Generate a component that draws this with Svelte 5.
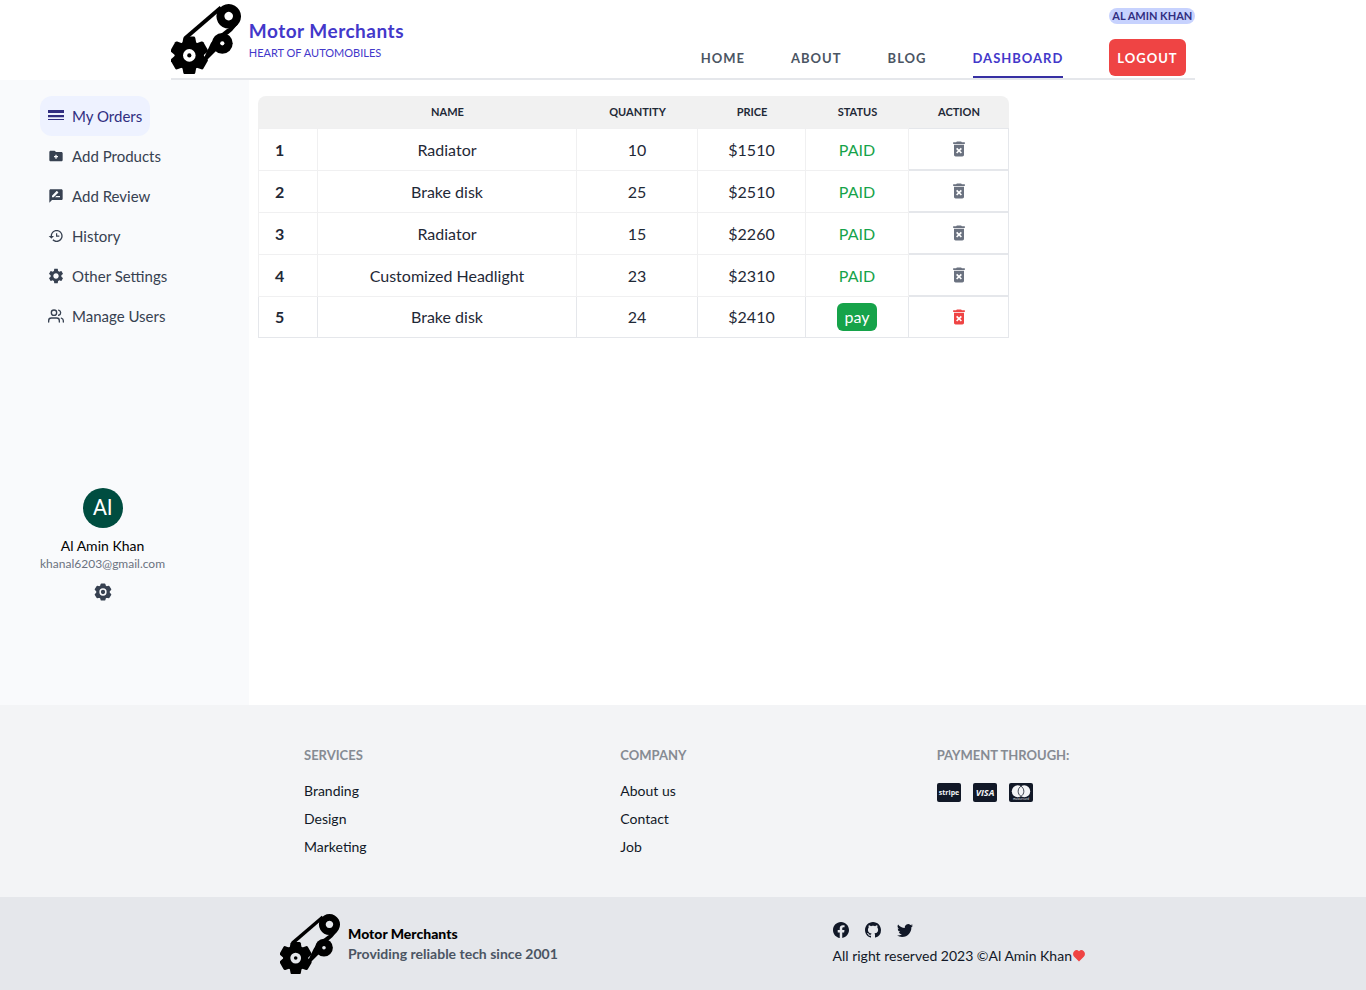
<script>
  const navLinks = ['Home', 'About', 'Blog', 'Dashboard'];
  const menu = [
    { label: 'My Orders', icon: 'orders' },
    { label: 'Add Products', icon: 'folder' },
    { label: 'Add Review', icon: 'review' },
    { label: 'History', icon: 'history' },
    { label: 'Other Settings', icon: 'settings' },
    { label: 'Manage Users', icon: 'users' }
  ];
  const orders = [
    { name: 'Radiator', quantity: 10, price: 1510, paid: true },
    { name: 'Brake disk', quantity: 25, price: 2510, paid: true },
    { name: 'Radiator', quantity: 15, price: 2260, paid: true },
    { name: 'Customized Headlight', quantity: 23, price: 2310, paid: true },
    { name: 'Brake disk', quantity: 24, price: 2410, paid: false }
  ];
  const footerColumns = [
    { title: 'Services', links: ['Branding', 'Design', 'Marketing'] },
    { title: 'Company', links: ['About us', 'Contact', 'Job'] }
  ];
  const teeth = [0, 60, 120, 180, 240, 300];
</script>

{#snippet logo()}
  <svg class="logo" viewBox="0 0 70 70" aria-hidden="true">
    <path d="M14.5 34 50 3.500" fill="none" stroke="#000" stroke-width="4" />
    <path d="M67 20 61 27Q58 30 54 32L46 40 40 47 35 58 32 56 39 41Q41 36 46 33L56 25Z" />
    <path d="M42 42 34 57 37 55 46 46Z" />
    <path fill-rule="evenodd" d="M57.7 0a12.3 12.3 0 1 0 .01 0ZM57.7 7.8a4.3 4.3 0 1 1-.01 0Z" />
    <circle cx="51.3" cy="39.3" r="10.4" />
    <circle class="hole" cx="51.3" cy="39.3" r="2.1" />
    <circle cx="18.3" cy="51.4" r="14.6" />
    {#each teeth as angle}
      <path d="M11 41 12.3 34Q12.7 32.6 14 32.6H22.6Q23.9 32.6 24.3 34L25.600 41Z" transform="rotate({angle} 18.3 51.4)" />
    {/each}
    <circle class="hole" cx="18.3" cy="51.4" r="6.3" />
    <circle cx="18.3" cy="51.4" r="2.1" />
  </svg>
{/snippet}

{#snippet menuIcon(name)}
  <svg class="icon" viewBox="0 0 24 24" fill="currentColor" aria-hidden="true">
    {#if name === 'orders'}
      <path d="M0 3h24v4.500H0zM0 10.500h24v3.500H0zM0 16.500h24V18H0z" />
    {:else if name === 'folder'}
      <path fill-rule="evenodd" d="M20 6h-8l-2-2H4c-1.11 0-1.99.89-1.99 2L2 18c0 1.11.89 2 2 2h16c1.11 0 2-.89 2-2V8c0-1.11-.89-2-2-2zM11 10h2v2h2v2h-2v2h-2v-2H9v-2h2z" />
    {:else if name === 'review'}
      <path d="M20 2H4c-1.1 0-1.99.9-1.99 2L2 22l4-4h14c1.1 0 2-.9 2-2V4c0-1.1-.9-2-2-2zM6 14v-2.47l6.88-6.88c.2-.2.51-.2.71 0l1.77 1.77c.2.2.2.51 0 .71L8.47 14H6zm12 0h-7.5l2-2H18v2z" />
    {:else if name === 'history'}
      <path d="M13 3c-4.97 0-9 4.03-9 9H1l3.89 3.89.07.14L9 12H6c0-3.87 3.13-7 7-7s7 3.13 7 7-3.13 7-7 7c-1.93 0-3.68-.79-4.94-2.06l-1.42 1.42C8.27 19.99 10.51 21 13 21c4.97 0 9-4.03 9-9s-4.03-9-9-9zm-1 5v5h5v-1.8h-3.2V8H12z" />
    {:else if name === 'settings'}
      <path transform="translate(-1.5 -1.5) scale(1.125)" d="M19.14 12.94c.04-.3.06-.61.06-.94 0-.32-.02-.64-.07-.94l2.03-1.58c.18-.14.23-.41.12-.61l-1.92-3.32c-.12-.22-.37-.29-.59-.22l-2.39.96c-.5-.38-1.03-.7-1.62-.94l-.36-2.54c-.04-.24-.24-.41-.48-.41h-3.84c-.24 0-.43.17-.47.41l-.36 2.54c-.59.24-1.13.57-1.62.94l-2.39-.96c-.22-.08-.47 0-.59.22L2.74 8.87c-.12.21-.08.47.12.61l2.03 1.58c-.05.3-.09.63-.09.94s.02.64.07.94l-2.03 1.58c-.18.14-.23.41-.12.61l1.92 3.32c.12.22.37.29.59.22l2.39-.96c.5.38 1.03.7 1.62.94l.36 2.54c.05.24.24.41.48.41h3.84c.24 0 .44-.17.47-.41l.36-2.54c.59-.24 1.13-.56 1.62-.94l2.39.96c.22.08.47 0 .59-.22l1.92-3.32c.12-.22.07-.47-.12-.61l-2.01-1.58zM12 15.6c-1.98 0-3.6-1.62-3.6-3.6s1.62-3.6 3.6-3.6 3.6 1.62 3.6 3.6-1.62 3.6-3.6 3.6z" />
    {:else}
      <g fill="none" stroke="currentColor" stroke-width="2" stroke-linecap="round" stroke-linejoin="round">
        <path d="M17 21v-2a4 4 0 0 0-4-4H5a4 4 0 0 0-4 4v2M23 21v-2a4 4 0 0 0-3-3.87M16 3.13a4 4 0 0 1 0 7.75" />
        <circle cx="9" cy="7" r="4" />
      </g>
    {/if}
  </svg>
{/snippet}

<header>
  <div class="bar">
    <a class="brand" href="#home">
      {@render logo()}
      <span class="brand-text">
        <strong>Motor Merchants</strong>
        <small>HEART OF AUTOMOBILES</small>
      </span>
    </a>
    <nav class="links" aria-label="Main">
      {#each navLinks as link}
        <a href="#{link.toLowerCase()}" class:current={link === 'Dashboard'}>{link}</a>
      {/each}
      <div class="account">
        <span class="badge">AL AMIN KHAN</span>
        <button class="logout">LOGOUT</button>
      </div>
    </nav>
  </div>
</header>

<div class="body">
  <aside>
    <nav class="menu" aria-label="Dashboard">
      {#each menu as item, i}
        <a href="#{item.icon}" class:active={i === 0}>
          {@render menuIcon(item.icon)}
          {item.label}
        </a>
      {/each}
    </nav>
    <div class="profile">
      <span class="avatar">Al</span>
      <span class="name">Al Amin Khan</span>
      <span class="email">khanal6203@gmail.com</span>
      <button class="gear" aria-label="Profile settings">
        <svg viewBox="0 0 18 18" aria-hidden="true">
          <path fill="currentColor" stroke="currentColor" stroke-width="1.6" stroke-linejoin="round" d="M7.4 1.2h3.2l.6 2 1.6.9 2-.5 1.7 2.8-1.5 1.6v2l1.5 1.6-1.7 2.8-2-.5-1.6.9-.6 2H7.4l-.6-2-1.6-.9-2 .5-1.7-2.8L3 10V8L1.5 6.4l1.7-2.8 2 .5 1.6-.9z" />
          <circle cx="9" cy="9" r="2.9" fill="none" stroke="#f9fafc" stroke-width="1.5" />
        </svg>
      </button>
    </div>
  </aside>

  <main>
    <table>
      <colgroup>
        <col class="c-index" /><col /><col class="c-qty" /><col class="c-price" /><col class="c-status" /><col class="c-action" />
      </colgroup>
      <thead>
        <tr>
          <th aria-label="Number"></th>
          <th>NAME</th>
          <th>QUANTITY</th>
          <th>PRICE</th>
          <th>STATUS</th>
          <th>ACTION</th>
        </tr>
      </thead>
      <tbody>
        {#each orders as order, i}
          <tr>
            <th scope="row">{i + 1}</th>
            <td>{order.name}</td>
            <td>{order.quantity}</td>
            <td>${order.price}</td>
            <td>
              {#if order.paid}
                <span class="paid">PAID</span>
              {:else}
                <button class="pay">pay</button>
              {/if}
            </td>
            <td>
              <button class="delete" class:enabled={!order.paid} disabled={order.paid} aria-label="Delete order {i + 1}">
                <svg viewBox="0 0 24 24" fill="currentColor" aria-hidden="true">
                  <path d="M6 19c0 1.1.9 2 2 2h8c1.1 0 2-.9 2-2V7H6v12zm2.46-7.12 1.41-1.41L12 12.59l2.12-2.12 1.41 1.41L13.41 14l2.12 2.12-1.41 1.41L12 15.41l-2.12 2.12-1.41-1.41L10.59 14l-2.13-2.12zM15.5 4l-1-1h-5l-1 1H5v2h14V4z" />
                </svg>
              </button>
            </td>
          </tr>
        {/each}
      </tbody>
    </table>
  </main>
</div>

<footer>
  <div class="columns">
    {#each footerColumns as column}
      <div class="column">
        <h2>{column.title}</h2>
        {#each column.links as link}
          <a href="#{link.toLowerCase()}">{link}</a>
        {/each}
      </div>
    {/each}
    <div class="column">
      <h2>Payment through:</h2>
      <div class="cards">
        <svg viewBox="0 0 24 19" role="img" aria-label="Stripe">
          <rect width="24" height="19" rx="2" />
          <text x="12" y="12" font-size="7">stripe</text>
        </svg>
        <svg viewBox="0 0 24 19" role="img" aria-label="Visa">
          <rect width="24" height="19" rx="2" />
          <text x="12" y="13" font-size="9" font-style="italic">VISA</text>
        </svg>
        <svg viewBox="0 0 24 19" role="img" aria-label="Mastercard">
          <rect width="24" height="19" rx="2" />
          <circle cx="8.8" cy="8.3" r="6" fill="#f3f4f6" />
          <circle cx="15.2" cy="8.3" r="6" fill="#f3f4f6" />
          <path d="M12 3.2a6 6 0 0 1 0 10.2 6 6 0 0 1 0-10.2z" fill="#f3f4f6" stroke="#111827" stroke-width=".8" />
          <text class="thin" x="12" y="17" font-size="3">mastercard</text>
        </svg>
      </div>
    </div>
  </div>

  <div class="bottom">
    <div class="bottom-inner">
      <div class="about">
        {@render logo()}
        <p><strong>Motor Merchants</strong><span>Providing reliable tech since 2001</span></p>
      </div>
      <div class="legal">
        <div class="social">
          <a href="#facebook" aria-label="Facebook">
            <svg viewBox="0 0 16 16" fill="currentColor"><path d="M16 8.049c0-4.446-3.582-8.05-8-8.05C3.58 0-.002 3.603-.002 8.05c0 4.017 2.926 7.347 6.75 7.951v-5.625h-2.03V8.05H6.75V6.275c0-2.017 1.195-3.131 3.022-3.131.876 0 1.791.157 1.791.157v1.98h-1.009c-.993 0-1.303.621-1.303 1.258v1.51h2.218l-.354 2.326H9.25V16c3.824-.604 6.75-3.934 6.75-7.951z" /></svg>
          </a>
          <a href="#github" aria-label="GitHub">
            <svg viewBox="0 0 16 16" fill="currentColor"><path d="M8 0C3.58 0 0 3.58 0 8c0 3.54 2.29 6.53 5.47 7.59.4.07.55-.17.55-.38 0-.19-.01-.82-.01-1.49-2.01.37-2.53-.49-2.69-.94-.09-.23-.48-.94-.82-1.13-.28-.15-.68-.52-.01-.53.63-.01 1.08.58 1.23.82.72 1.21 1.87.87 2.33.66.07-.52.28-.87.51-1.07-1.78-.2-3.64-.89-3.64-3.95 0-.87.31-1.59.82-2.15-.08-.2-.36-1.02.08-2.12 0 0 .67-.21 2.2.82.64-.18 1.32-.27 2-.27s1.36.09 2 .27c1.53-1.04 2.2-.82 2.2-.82.44 1.1.16 1.92.08 2.12.51.56.82 1.27.82 2.15 0 3.07-1.87 3.75-3.65 3.95.29.25.54.73.54 1.48 0 1.07-.01 1.93-.01 2.2 0 .21.15.46.55.38A8.01 8.01 0 0 0 16 8c0-4.42-3.58-8-8-8z" /></svg>
          </a>
          <a href="#twitter" aria-label="Twitter">
            <svg viewBox="0 0 16 16" fill="currentColor"><path d="M5.026 15c6.038 0 9.341-5.003 9.341-9.334 0-.14 0-.282-.006-.422A6.685 6.685 0 0 0 16 3.542a6.658 6.658 0 0 1-1.889.518 3.301 3.301 0 0 0 1.447-1.817 6.533 6.533 0 0 1-2.087.793A3.286 3.286 0 0 0 7.875 6.03a9.325 9.325 0 0 1-6.767-3.429 3.289 3.289 0 0 0 1.018 4.382A3.323 3.323 0 0 1 .64 6.575v.045a3.288 3.288 0 0 0 2.632 3.218 3.203 3.203 0 0 1-.865.115 3.23 3.23 0 0 1-.614-.057 3.283 3.283 0 0 0 3.067 2.277A6.588 6.588 0 0 1 .78 13.58a6.32 6.32 0 0 1-.78-.045A9.344 9.344 0 0 0 5.026 15z" /></svg>
          </a>
        </div>
        <p class="rights">
          All right reserved 2023 ©Al Amin Khan<svg class="heart" viewBox="0 0 20 20" aria-hidden="true"><path fill="#ef4444" d="M3.172 3.172a5 5 0 0 1 6.828 0 5 5 0 0 1 6.828 0 5.600 5.600 0 0 1 0 8L10 18l-6.828-6.828a5.600 5.600 0 0 1 0-8z" /></svg>
        </p>
      </div>
    </div>
  </div>
</footer>

<style>
  :global(body) {
    background: #fff;
    color: #1f2937;
    font: 16px/24px Lato, sans-serif;
  }
  :global(*) { box-sizing: border-box; }
  a { color: inherit; text-decoration: none; }
  button { border: 0; padding: 0; background: none; font: inherit; color: inherit; cursor: pointer; }
  svg { display: block; }

  .bar {
    width: 75%;
    height: 80px;
    margin: 0 auto;
    display: flex;
    justify-content: space-between;
    border-bottom: 2px solid #e5e7eb;
  }
  .brand { display: flex; align-items: center; gap: 8px; color: #4338ca; }
  .logo { width: 70px; height: 70px; }
  .hole { fill: #fff; }
  .brand-text { display: flex; flex-direction: column; padding-top: 4px; }
  .brand-text strong { font-size: 19px; line-height: 24px; letter-spacing: .5px; }
  .brand-text small { font-size: 11px; line-height: 20px; }

  .links { display: flex; align-items: flex-end; gap: 46px; }
  .links > a {
    height: 30px;
    border-bottom: 2px solid transparent;
    color: #4b5563;
    font-size: 13px;
    line-height: 20px;
    font-weight: 700;
    letter-spacing: 1px;
    text-transform: uppercase;
  }
  .links > a.current { color: #4338ca; border-color: #3730a3; }
  .account { display: flex; flex-direction: column; align-items: flex-start; gap: 15px; padding-bottom: 2px; }
  .badge {
    padding: 0 3px;
    border-radius: 8px;
    background: #c7d2fe;
    color: #312e81;
    font-size: 11px;
    line-height: 16px;
    font-weight: 700;
  }
  .logout {
    height: 37px;
    padding: 0 8px;
    border-radius: 6px;
    background: #ef4444;
    color: #fff;
    font-size: 13px;
    font-weight: 700;
    letter-spacing: 1px;
  }

  .body { display: flex; min-height: 625px; }
  aside { width: 249px; flex: none; padding: 16px 40px; background: #f9fafc; }
  .menu { display: flex; flex-direction: column; align-items: flex-start; color: #374151; font-size: 15px; }
  .menu a { display: flex; align-items: center; gap: 8px; height: 40px; padding: 0 8px; border-radius: 12px; white-space: nowrap; }
  .menu a.active { background: #eef2ff; color: #312e81; }
  .icon { width: 16px; height: 16px; }
  .profile { display: inline-flex; flex-direction: column; align-items: center; margin-top: 152px; }
  .avatar {
    width: 40px;
    height: 40px;
    margin-bottom: 8px;
    border-radius: 50%;
    background: #004d40;
    color: #fff;
    font: 22px/40px Roboto, sans-serif;
    text-align: center;
  }
  .name { color: #000; font-size: 14px; line-height: 20px; }
  .email { color: #6b7280; font-size: 12px; line-height: 16px; }
  .gear { margin-top: 11px; color: #374151; }
  .gear svg { width: 18px; height: 18px; }

  main { flex: 1; padding: 16px 9px; }
  table { width: 100%; max-width: 751px; table-layout: fixed; border-collapse: separate; border-spacing: 0; text-align: center; }
  .c-index { width: 60px; }
  .c-qty { width: 121px; }
  .c-price { width: 108px; }
  .c-status { width: 103px; }
  .c-action { width: 100px; }
  thead th { height: 33px; padding: 0; border-bottom: 1px solid #f0f0f1; background: #f1f1f1; font-size: 11px; line-height: 16px; font-weight: 700; }
  thead th:first-child { border-top-left-radius: 8px; }
  thead th:last-child { border-top-right-radius: 8px; border-color: #e5e7eb; }
  tbody th, td { height: 42px; padding: 0; border: solid #f0f0f1; border-width: 0 1px 1px 0; }
  tbody th { padding-left: 16px; border-left-width: 1px; text-align: left; }
  td:last-child { border-color: #e5e7eb; border-bottom-width: 2px; }
  tbody tr:last-child > * { height: 41px; border-color: #e5e7eb; border-bottom-width: 1px; }
  .paid { color: #16a34a; }
  .pay { height: 28px; padding: 0 8px; border-radius: 6px; background: #16a34a; color: #fff; line-height: 28px; }
  .delete { display: block; margin: 0 auto; color: #6b7280; }
  .delete.enabled { color: #ef4444; }
  .delete svg { width: 20px; height: 20px; }

  footer { font-size: 14px; line-height: 20px; color: #111827; }
  .columns {
    display: grid;
    grid-template-columns: 5fr 5fr 6fr;
    gap: 16px;
    padding: 40px 69px 40px 304px;
    background: #f3f4f6;
  }
  .column { display: flex; flex-direction: column; align-items: flex-start; gap: 8px; }
  h2 { margin: 0 0 8px; color: #868b93; font-size: 13px; line-height: 20px; font-weight: 700; text-transform: uppercase; }
  .cards { display: flex; gap: 12px; padding-top: 2px; }
  .cards svg { width: 24px; height: 19px; }
  .cards rect { fill: #111827; }
  .cards text { fill: #f3f4f6; font-family: "Open Sans", sans-serif; font-weight: 700; text-anchor: middle; }
  .cards .thin { font-weight: 400; }
  .bottom { background: #e5e7eb; }
  .bottom .hole { fill: #e5e7eb; }
  .bottom-inner { width: 59%; margin: 0 auto; padding: 17px 0 16px; display: flex; align-items: center; justify-content: space-between; }
  .about { display: flex; align-items: center; gap: 8px; }
  .about .logo { width: 60px; height: 60px; }
  p { margin: 0; }
  .about p { display: flex; flex-direction: column; font-weight: 700; }
  .about strong { color: #000; }
  .about span { color: #4b5563; }
  .social { display: flex; gap: 16px; margin-bottom: 8px; }
  .social svg { width: 16px; height: 16px; }
  .rights { display: flex; align-items: center; }
  .heart { width: 14px; height: 14px; }
</style>
